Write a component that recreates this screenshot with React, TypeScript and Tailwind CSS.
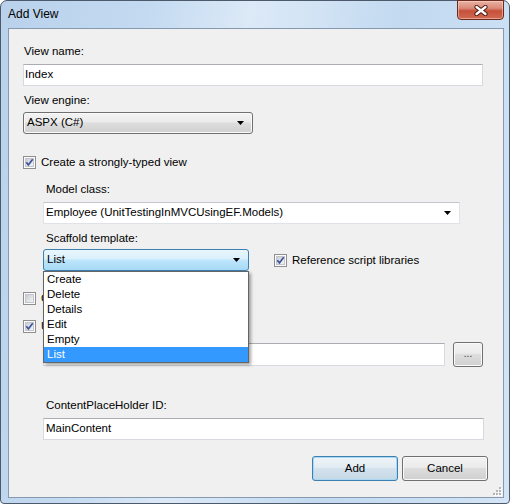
import React from "react";

function CheckBox({ checked }: { checked: boolean }) {
  return (
    <svg width="13" height="13" viewBox="0 0 13 13" className="block shrink-0">
      <defs>
        <linearGradient id="cbInner" x1="0" y1="0" x2="1" y2="1">
          <stop offset="0" stopColor="#c6cbd2" />
          <stop offset="1" stopColor="#f6f6f6" />
        </linearGradient>
      </defs>
      <rect x="0.5" y="0.5" width="12" height="12" fill="#fcfcfc" stroke="#8f8f8f" />
      <rect x="2.5" y="2.5" width="8" height="8" fill="url(#cbInner)" stroke="#c2c6cc" />
      {checked && (
        <path
          d="M3.3 6.3 L5.4 8.9 L9.7 3.2"
          fill="none"
          stroke="#3b549b"
          strokeWidth="1.7"
        />
      )}
    </svg>
  );
}

function Arrow() {
  return (
    <svg width="7" height="4" viewBox="0 0 7 4" className="block">
      <path d="M0 0 H7 L3.5 4 Z" fill="#000" />
    </svg>
  );
}

function CheckRow({ checked, label }: { checked: boolean; label: string }) {
  return (
    <div className="h-[15px] flex items-center gap-[5px] ml-[0px]">
      <CheckBox checked={checked} />
      <span className="leading-[15px] whitespace-nowrap">{label}</span>
    </div>
  );
}

export default function App() {
  return (
    <div className="w-[510px] h-[504px] font-['Liberation_Sans',Arial,sans-serif] text-[11.5px] text-black">
      <div className="relative w-[510px] h-[504px] rounded-t-[7px] rounded-b-[4px] border border-[#4d5a6b] bg-[linear-gradient(100deg,#b9d1eb_0%,#c3daf1_25%,#dce9f7_42%,#d3e4f5_52%,#c2d9f0_68%,#d3e5f6_100%)] flex flex-col pl-[7px] pr-[5px] pb-[5px]">
        {/* title bar */}
        <div className="h-[27px] flex items-center text-[12px] leading-[15px] pb-[1px]">
          Add View
        </div>
        {/* close button */}
        <div className="absolute top-[-1px] right-[5px] w-[47px] h-[20px] rounded-b-[4px] border border-[#6b2a1f] bg-[linear-gradient(#eab2a4_0%,#d98a78_40%,#c7503a_55%,#cf6a52_100%)] shadow-[inset_0_0_0_1px_rgba(255,220,210,0.5)] flex items-center justify-center">
          <svg width="14" height="11" viewBox="0 0 14 11" className="block">
            <path d="M2.5 2 L11.5 9 M11.5 2 L2.5 9" stroke="#4b1a12" strokeWidth="4.2" strokeLinecap="round" />
            <path d="M2.5 2 L11.5 9 M11.5 2 L2.5 9" stroke="#ffffff" strokeWidth="2.3" strokeLinecap="round" />
          </svg>
        </div>

        {/* client area */}
        <div className="relative flex-1 border border-[#8799b0] bg-[#f0f0f0] pl-[14px] pr-[15px] flex flex-col">
          <div className="mt-[15px] h-[15px] leading-[15px] pl-[1px]">View name:</div>
          <div className="mt-[5px] mr-[5px] h-[22px] bg-white border border-[#d6d9df] border-t-[#abadb3] flex items-center pl-[1px]">
            Index
          </div>

          <div className="mt-[7px] h-[15px] leading-[15px] pl-[1px]">View engine:</div>
          <div className="mt-[4px] w-[230px] h-[22px] rounded-[3px] border border-[#707070] bg-[linear-gradient(#f3f3f3_0%,#ebebeb_45%,#dddddd_50%,#d0d0d0_100%)] shadow-[inset_0_0_0_1px_#fafafa] flex items-center justify-between pl-[3px] pr-[8px]">
            <span>ASPX (C#)</span>
            <Arrow />
          </div>

          <div className="mt-[21px]">
            <CheckRow checked={true} label="Create a strongly-typed view" />
          </div>

          <div className="ml-[20px] flex flex-col">
            <div className="mt-[12px] h-[15px] leading-[15px] pl-[3px]">Model class:</div>
            <div className="mt-[5px] w-[417px] h-[22px] bg-white border border-[#dfe2e7] border-t-[#c4c7cd] flex items-center justify-between pl-[2px] pr-[8px]">
              <span className="whitespace-nowrap">Employee (UnitTestingInMVCUsingEF.Models)</span>
              <Arrow />
            </div>

            <div className="mt-[7px] h-[15px] leading-[15px] pl-[3px]">Scaffold template:</div>
            <div className="mt-[3px] h-[22px] flex items-center">
              <div className="relative w-[206px] h-[22px]">
                <div className="w-full h-full rounded-[3px] border border-[#3c7fb1] bg-[linear-gradient(#eaf6fd_0%,#d9f0fc_45%,#bee6fd_50%,#a7d9f5_100%)] flex items-center justify-between pl-[3px] pr-[8px]">
                  <span>List</span>
                  <Arrow />
                </div>
                {/* dropdown list */}
                <div className="absolute left-0 top-full z-10 w-[206px] bg-white border border-[#646464] shadow-[2px_2px_3px_rgba(0,0,0,0.35)] flex flex-col">
                  {["Create", "Delete", "Details", "Edit", "Empty"].map((t) => (
                    <div key={t} className="h-[15px] leading-[15px] pl-[3px]">
                      {t}
                    </div>
                  ))}
                  <div className="h-[15px] leading-[15px] pl-[3px] bg-[#3399ff] text-white">List</div>
                </div>
              </div>
              <div className="ml-[25px]">
                <CheckRow checked={true} label="Reference script libraries" />
              </div>
            </div>
          </div>

          <div className="mt-[20px]">
            <CheckRow checked={false} label="Create as a partial view" />
          </div>
          <div className="mt-[13px]">
            <CheckRow checked={true} label="Use a layout or master page:" />
          </div>

          <div className="ml-[20px] flex flex-col">
            <div className="mt-[8px] h-[25px] flex items-center">
              <div className="w-[402px] h-[23px] bg-white border border-[#d6d9df] border-t-[#abadb3] flex items-center pl-[2px]">
                ~/Views/Shared/Site.Master
              </div>
              <div className="ml-[8px] w-[30px] h-[25px] rounded-[3px] border border-[#707070] bg-[linear-gradient(#f3f3f3_0%,#ebebeb_45%,#dddddd_50%,#d0d0d0_100%)] shadow-[inset_0_0_0_1px_#fafafa] flex items-center justify-center text-[10px] text-[#333] pb-[2px]">
                ...
              </div>
            </div>

            <div className="mt-[31px] h-[15px] leading-[15px] pl-[3px]">ContentPlaceHolder ID:</div>
            <div className="mt-[5px] mr-[4px] h-[22px] bg-white border border-[#d6d9df] border-t-[#abadb3] flex items-center pl-[2px]">
              MainContent
            </div>
          </div>

          <div className="mt-[16px] flex justify-end gap-[4px]">
            <div className="w-[86px] h-[25px] rounded-[3px] border border-[#3c7fb1] bg-[linear-gradient(#eef4f8_0%,#e3ecf3_45%,#d4e2ed_50%,#c6d8e6_100%)] shadow-[inset_0_0_0_1px_#a9d9f1] flex items-center justify-center">
              Add
            </div>
            <div className="w-[86px] h-[25px] rounded-[3px] border border-[#707070] bg-[linear-gradient(#f3f3f3_0%,#ebebeb_45%,#dddddd_50%,#d0d0d0_100%)] shadow-[inset_0_0_0_1px_#fafafa] flex items-center justify-center">
              Cancel
            </div>
          </div>

          {/* resize grip */}
          <svg width="10" height="10" viewBox="0 0 10 10" className="absolute right-[1px] bottom-[1px] block">
            {[
              [7, 1],
              [4, 4],
              [7, 4],
              [1, 7],
              [4, 7],
              [7, 7],
            ].map(([x, y], i) => (
              <g key={i}>
                <rect x={x + 1} y={y + 1} width="2" height="2" fill="#ffffff" />
                <rect x={x} y={y} width="2" height="2" fill="#b4b4b4" />
              </g>
            ))}
          </svg>
        </div>
      </div>
    </div>
  );
}
